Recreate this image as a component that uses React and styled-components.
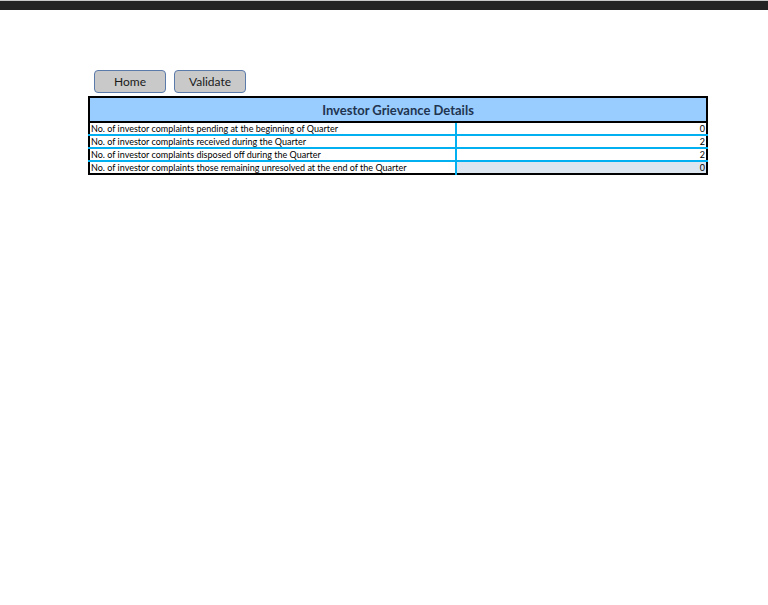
import React from "react";
import styled, { createGlobalStyle } from "styled-components";

const GlobalStyle = createGlobalStyle`
  body {
    margin: 0;
    background: #ffffff;
    font-family: Lato, "Open Sans", sans-serif;
  }
`;

const TopBar = styled.div`
  height: 10px;
  background: #232323;
  border-top: 1px solid #c8c8c8;
  box-sizing: border-box;
`;

const Page = styled.div`
  padding: 60px 0 0 88px;
  width: 620px;
`;

const Toolbar = styled.div`
  display: flex;
  gap: 8px;
  padding-left: 6px;
  margin-bottom: 3px;
`;

const Button = styled.button`
  width: 72px;
  height: 23px;
  background: #c9c9c9;
  border: 1px solid #5b7bab;
  border-radius: 4px;
  font-family: Lato, "Open Sans", sans-serif;
  font-size: 12px;
  color: #1a1a1a;
  padding: 0;
  cursor: pointer;
`;

const Table = styled.table`
  width: 620px;
  border-collapse: collapse;
  border: 2px solid #000000;
  font-family: Lato, "Open Sans", sans-serif;
`;

const Header = styled.th`
  background: #99ccff;
  height: 23px;
  padding: 0;
  font-size: 13px;
  font-weight: bold;
  color: #1f3550;
  text-align: center;
  border-bottom: 2px solid #000000;
`;

const Cell = styled.td`
  font-size: 9px;
  height: 11px;
  line-height: 11px;
  padding: 0 1px;
  color: #000000;
  white-space: nowrap;
  border-top: 2px solid #00b0f0;
  border-right: ${({ $divider }) => ($divider ? "2px solid #00b0f0" : "none")};
  text-align: ${({ $num }) => ($num ? "right" : "left")};
  background: ${({ $shaded }) => ($shaded ? "#dce6f1" : "#ffffff")};
  width: ${({ $divider }) => ($divider ? "363px" : "auto")};
`;

const rows = [
  ["No. of investor complaints pending at the beginning of Quarter", "0"],
  ["No. of investor complaints received during the Quarter", "2"],
  ["No. of investor complaints disposed off during the Quarter", "2"],
  [
    "No. of investor complaints those remaining unresolved at the end of the Quarter",
    "0",
  ],
];

const App = () => {
  return (
    <>
      <GlobalStyle />
      <TopBar />
      <Page>
        <Toolbar>
          <Button>Home</Button>
          <Button>Validate</Button>
        </Toolbar>
        <Table>
          <thead>
            <tr>
              <Header colSpan={2}>Investor Grievance Details</Header>
            </tr>
          </thead>
          <tbody>
            {rows.map(([label, value], i) => (
              <tr key={i}>
                <Cell $divider>{label}</Cell>
                <Cell $num $shaded={i === rows.length - 1}>
                  {value}
                </Cell>
              </tr>
            ))}
          </tbody>
        </Table>
      </Page>
    </>
  );
};

export default App;
